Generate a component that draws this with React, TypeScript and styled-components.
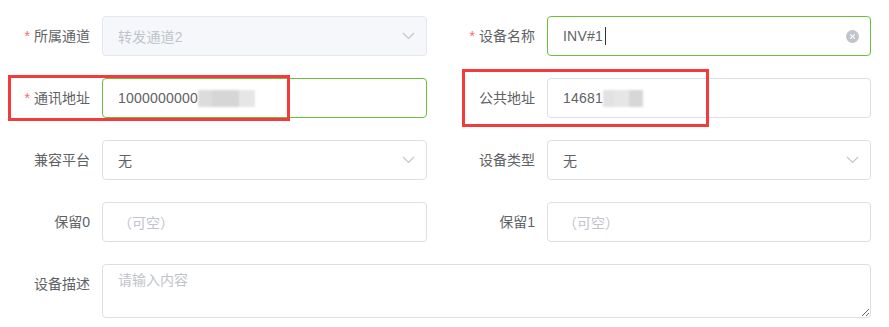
import React from "react";
import styled, { createGlobalStyle } from "styled-components";

const GlobalStyle = createGlobalStyle`
  html, body {
    margin: 0;
    padding: 0;
    background: #ffffff;
  }
  body {
    font-family: "Liberation Sans", "Noto Sans CJK SC", sans-serif;
    font-size: 14px;
    color: #606266;
  }
`;

const Page = styled.div`
  position: relative;
  width: 889px;
  height: 327px;
  overflow: hidden;
`;

const Form = styled.div`
  display: grid;
  grid-template-columns: 427px 426px;
  column-gap: 18px;
  padding-top: 16px;
`;

const FormItem = styled.div<{ $full?: boolean }>`
  display: flex;
  align-items: flex-start;
  margin-bottom: 22px;
  grid-column: ${(p) => (p.$full ? "1 / -1" : "auto")};
`;

const Label = styled.label`
  flex: 0 0 102px;
  box-sizing: border-box;
  padding-right: 12px;
  text-align: right;
  line-height: 40px;
  height: 40px;
  font-size: 14px;
  color: #606266;
  white-space: nowrap;
`;

const Star = styled.span`
  color: #f56c6c;
  margin-right: 4px;
`;

const Box = styled.div<{ $state?: "normal" | "success" | "disabled" }>`
  flex: 1;
  box-sizing: border-box;
  height: 40px;
  display: flex;
  align-items: center;
  padding: 0 5px 0 15px;
  border-radius: 4px;
  border: 1px solid
    ${(p) =>
      p.$state === "success"
        ? "#67c23a"
        : p.$state === "disabled"
        ? "#e4e7ed"
        : "#dcdfe6"};
  background: ${(p) => (p.$state === "disabled" ? "#f5f7fa" : "#ffffff")};
  color: ${(p) => (p.$state === "disabled" ? "#c0c4cc" : "#606266")};
  font-size: 14px;
`;

const Value = styled.span`
  display: inline-flex;
  align-items: center;
  white-space: nowrap;
  letter-spacing: 0.2px;
`;

const Placeholder = styled.span`
  color: #c0c4cc;
  white-space: nowrap;
`;

const Caret = styled.span`
  display: inline-block;
  width: 1px;
  height: 18px;
  margin-left: 2px;
  background: #303133;
`;

const BlurGroup = styled.span`
  display: inline-flex;
  filter: blur(0.8px);
`;

const Blur = styled.span<{ $w: number; $c: string }>`
  display: inline-block;
  width: ${(p) => p.$w}px;
  height: 17px;
  background: ${(p) => p.$c};
`;

const Suffix = styled.span`
  margin-left: auto;
  width: 25px;
  height: 38px;
  display: flex;
  align-items: center;
  justify-content: center;
`;

const TextArea = styled.textarea`
  flex: 1;
  box-sizing: border-box;
  height: 54px;
  padding: 5px 15px;
  border: 1px solid #dcdfe6;
  border-radius: 4px;
  font-family: "Liberation Sans", "Noto Sans CJK SC", sans-serif;
  font-size: 14px;
  line-height: 1.5;
  color: #606266;
  resize: vertical;
  outline: none;
  &::placeholder {
    color: #c0c4cc;
  }
`;

const Annotation = styled.div<{ $l: number; $t: number; $w: number; $h: number }>`
  position: absolute;
  left: ${(p) => p.$l}px;
  top: ${(p) => p.$t}px;
  width: ${(p) => p.$w}px;
  height: ${(p) => p.$h}px;
  box-sizing: border-box;
  border: 3.5px solid #f33b3b;
  pointer-events: none;
`;

const Chevron = () => (
  <svg width="13" height="8" viewBox="0 0 13 8" fill="none">
    <path d="M1 1 L6.5 6.5 L12 1" stroke="#c0c4cc" strokeWidth="1.1" />
  </svg>
);

const ClearIcon = () => (
  <svg width="13" height="13" viewBox="0 0 14 14">
    <circle cx="7" cy="7" r="7" fill="#c0c4cc" />
    <path d="M4.6 4.6 L9.4 9.4 M9.4 4.6 L4.6 9.4" stroke="#ffffff" strokeWidth="1.2" />
  </svg>
);

export default function App() {
  return (
    <>
      <GlobalStyle />
      <Page>
        <Form>
          <FormItem>
            <Label>
              <Star>*</Star>所属通道
            </Label>
            <Box $state="disabled">
              <Value>转发通道2</Value>
              <Suffix>
                <Chevron />
              </Suffix>
            </Box>
          </FormItem>
          <FormItem>
            <Label>
              <Star>*</Star>设备名称
            </Label>
            <Box $state="success">
              <Value>
                INV#1
                <Caret />
              </Value>
              <Suffix>
                <ClearIcon />
              </Suffix>
            </Box>
          </FormItem>

          <FormItem>
            <Label>
              <Star>*</Star>通讯地址
            </Label>
            <Box $state="success">
              <Value>
                1000000000
                <BlurGroup>
                  <Blur $w={14} $c="#dcdcdd" />
                  <Blur $w={27} $c="#d6d6d7" />
                  <Blur $w={16} $c="#e6e6e6" />
                </BlurGroup>
              </Value>
            </Box>
          </FormItem>
          <FormItem>
            <Label>公共地址</Label>
            <Box>
              <Value>
                14681
                <BlurGroup>
                  <Blur $w={11} $c="#e2e2e2" />
                  <Blur $w={15} $c="#e6e6e6" />
                  <Blur $w={14} $c="#d7d7d7" />
                </BlurGroup>
              </Value>
            </Box>
          </FormItem>

          <FormItem>
            <Label>兼容平台</Label>
            <Box>
              <Value>无</Value>
              <Suffix>
                <Chevron />
              </Suffix>
            </Box>
          </FormItem>
          <FormItem>
            <Label>设备类型</Label>
            <Box>
              <Value>无</Value>
              <Suffix>
                <Chevron />
              </Suffix>
            </Box>
          </FormItem>

          <FormItem>
            <Label>保留0</Label>
            <Box>
              <Placeholder>（可空）</Placeholder>
            </Box>
          </FormItem>
          <FormItem>
            <Label>保留1</Label>
            <Box>
              <Placeholder>（可空）</Placeholder>
            </Box>
          </FormItem>

          <FormItem $full>
            <Label>设备描述</Label>
            <TextArea placeholder="请输入内容" rows={2} />
          </FormItem>
        </Form>
        <Annotation $l={8} $t={75} $w={282} $h={46} />
        <Annotation $l={462} $t={69} $w={247} $h={58} />
      </Page>
    </>
  );
}
